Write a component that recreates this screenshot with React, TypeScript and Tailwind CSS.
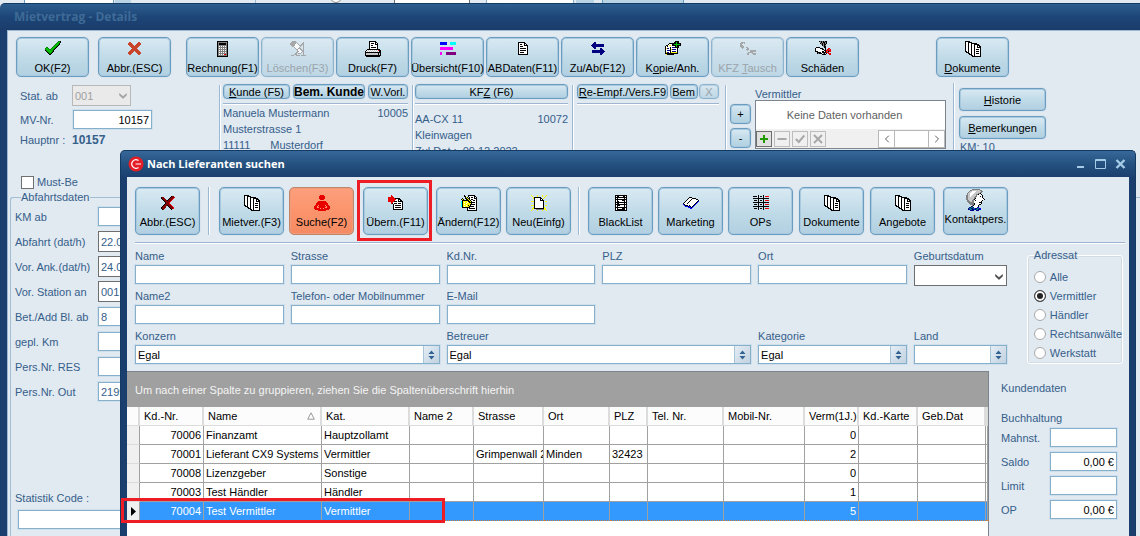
import React, { useState } from 'react';

const PALETTE: Record<string, string> = {
  k: '#000000',
  w: '#ffffff',
  g: '#008000',
  l: '#00c000',
  n: '#000080',
  b: '#0000ff',
  c: '#00ffff',
  m: '#ff00ff',
  p: '#800080',
  r: '#e80000',
  d: '#800000',
  o: '#c8452c',
  y: '#ffff00',
  s: '#808080',
  x: '#8c8c8c',
  t: '#008080',
  v: '#c8c8c8',
};

const ICONS: Record<string, string[]> = {
  check: [
    '.............ggk',
    '............gllk',
    '...........gllk.',
    '..........gllgk.',
    '.........gllgk..',
    '........gllgk...',
    '.gg....gllgk....',
    'gllg..gllgk.....',
    'glllggllgk......',
    'kglllllgk.......',
    '.kgllllgk.......',
    '..kgllgk........',
    '...kggk.........',
    '....kk..........',
  ],
  crossRed: [
    '................',
    '..oo.......oo...',
    '.oooo.....oooo..',
    '.ooooo...ooooo..',
    '..ooooo.ooooo...',
    '...ooooooooo....',
    '....ooooooo.....',
    '.....ooooo......',
    '....ooooooo.....',
    '...ooooooooo....',
    '..ooooo.ooooo...',
    '.ooooo...ooooo..',
    '.oooo.....oooo..',
    '..oo.......oo...',
  ],
  crossDark: [
    '................',
    '...........kdd..',
    '.kdd......kdddr.',
    '.kddd....kdddr..',
    '..kddd..kdddr...',
    '...kdddkdddr....',
    '....kdddddr.....',
    '.....kdddr......',
    '.....kdddr......',
    '....kdddddr.....',
    '...kdddkdddr....',
    '..kddd..kdddr...',
    '.kdddd...kdddr..',
    '.kddd.....kddr..',
    '..kd.......k....',
  ],
  calc: [
    '..kkkkkkkkkkk...',
    '..ksssssssssk...',
    '..kskkkkkkksk...',
    '..kskkkkkkksk...',
    '..ksssssssssk...',
    '..kswswswswsk...',
    '..ksssssssssk...',
    '..kswswswswsk...',
    '..ksssssssssk...',
    '..kswswswswsk...',
    '..ksssssssssk...',
    '..kswswswswsk...',
    '..ksssssssssk...',
    '..kswswswrrsk...',
    '..ksssssssssk...',
    '..kkkkkkkkkkk...',
  ],
  trash: [
    '..xxxx..........',
    '.xxxxxx......x..',
    'xxxxxxwx....xx..',
    'xxxxxwwwx..xxx..',
    '.xxxxwwwwxxx.x..',
    '..xxwwwwwwx..x..',
    '....xwwwwx...x..',
    '.....xwwxxx..x..',
    '......xxwwxx.x..',
    '.......xwwwxxx..',
    '.......xxwwwxx..',
    '......xxwwwx.x..',
    '.....xx.xxx..x..',
    '....xxx......x..',
    '.xxx..xxxx.xxxxx',
  ],
  printer: [
    '....kkkkkkk.....',
    '....kwwwwwkk....',
    '....kwkkkwkwk...',
    '....kwwwwwkkk...',
    '....kwkkwwwwk...',
    '....kwwwwwwwk...',
    '....kwkkkkkwk...',
    '....kwwwwwwwk...',
    '..kkkkkkkkkkkkk.',
    '.kwvwvwvwvwvwrkk',
    'kwvwvwvwvwvwvwkk',
    'kkkkkkkkkkkkkkkk',
    'kvvvvvvvvvvvvkvk',
    'kvvvvvvvvvvvvkvk',
    'kkkkkkkkkkkkkkkk',
    '.kkkkkkkkkkkkkk.',
  ],
  bars: [
    '................',
    'bbbbbbb...cccccc',
    'bbbbbbb...cccccc',
    'bbbbbbb...cccccc',
    '................',
    '................',
    'mmmmmmmmmmmmm...',
    'mmmmmmmmmmmmm...',
    'mmmmmmmmmmmmm...',
    '................',
    '................',
    'mm....pppppppppp',
    'mm....pppppppppp',
    'mm....pppppppppp',
  ],
  page: [
    '................',
    '...kkkkkkk......',
    '...kwwwwwkk.....',
    '...kwkkwwkwk....',
    '...kwwwwwkkkk...',
    '...kwkkkwwwwk...',
    '...kwwwwwwwwk...',
    '...kwkkkkkkwk...',
    '...kwwwwwwwwk...',
    '...kwkkkkkkwk...',
    '...kwwwwwwwwk...',
    '...kwkkkkwwwk...',
    '...kwwwwwwwwk...',
    '...kkkkkkkkkk...',
  ],
  arrows: [
    '................',
    '....nn..........',
    '...nnn..........',
    '..nnnnnnnnnnnn..',
    '.nnnnnnnnnnnnn..',
    '..nnnnnnnnnnnn..',
    '...nnn..........',
    '....nn....nn....',
    '..........nnn...',
    '..nnnnnnnnnnnn..',
    '..nnnnnnnnnnnnn.',
    '..nnnnnnnnnnnn..',
    '..........nnn...',
    '..........nn....',
  ],
  copy: [
    '..........kkkk..',
    '.........kklkk..',
    '....kkkkkkklkkkk',
    '...kwwwkkllllllk',
    '.kkwyywkkkklkkkk',
    'kwkwwwwwwwklkk..',
    'kwwwwkwnnnkkkk..',
    'kynnwkwwwwwwk...',
    'kwwwwkynnnnwk...',
    'kwnnnkwwwwwwk...',
    'kwwwwkwnnnnwk...',
    'kynnwkyyyyyyk...',
    'kkkkkkkkkkkkk...',
    '.ykkkkkkk.......',
  ],
  swap: [
    '................',
    '.xxxx...........',
    'xxx.x...........',
    'xx..............',
    'xxx.............',
    'xxxx............',
    '.xxx..xx........',
    '..x....xx.......',
    '......xxx.......',
    '.......x..xxxxxx',
    '..........xxxxxx',
    '........xxxxx...',
    '.......xx...xxxx',
    '.......xx....xxx',
  ],
  crash: [
    '....kskskskk....',
    '.....skskksk....',
    '.....ksksksk....',
    '......skskk.....',
    '.......ksks.....',
    '........skk.....',
    '.kkkk....kk.....',
    'kwwwwkkk..k..rr.',
    'kwwwwwwkk.k.rrsr',
    'kwwwwwwwwkkrrrrr',
    'kkkwwwwkkwkrskrr',
    '..kkkkwkkkkrrr..',
    '..kskkkwsk.k.rrr',
    '.......kkkk...rr',
  ],
  docs: [
    'kkkkk...........',
    'kwwkkkk.........',
    'kwwkwwkkkkkk....',
    'kwwkwwkwwkkkkk..',
    'kwwkwwkwwkwwkkk.',
    'kwwkwwkwwkwwkwkk',
    'kwwkwwkwwkwwkkkk',
    'kwwkwwkwwkwwwwwk',
    'kwwkwwkwwkwkkkwk',
    'kwwkwwkwwkwwwwwk',
    'kkwkwwkwwkwkkkwk',
    '.kkkwwkwwkwwwwwk',
    '...kkwkwwkwkkkwk',
    '....kkkwwkwwwwwk',
    '......kkwkwwwwwk',
    '.......kkkkkkkkk',
  ],
  person: [
    '......rrrr......',
    '.....rrrrrr.....',
    '.....rrrrrr.....',
    '.....rrrrrr.....',
    '......rrrr......',
    '................',
    '....rrrrrrrr....',
    '...rrrrrrrrrr...',
    '..rrrrrrrrrrrr..',
    '..rrrrrrrrrrrr..',
    '.rrr.rrrrrr.rrr.',
    'rrr.rrrrrrrr.rrr',
    'rrr..rrrrrr..rrr',
    'rrrrrr.rr.rrrrrr',
    '.rrrrrrrrrrrrrr.',
    '....rrrrrrrr....',
  ],
  pageIn: [
    '...r............',
    '...rr...........',
    'rrrrrr..........',
    'rrrrrrrkkkkk....',
    'rrrrrrrrwwkkk...',
    'rrrrrrrwwwkwkk..',
    'rrrrrrkkkwkkkkk.',
    '...rrwwwwwwwwwk.',
    '...rkwkkkwkkkwk.',
    '.....kwwwwwwwwk.',
    '.....kwkkkkkkwk.',
    '.....kwwwwwwwwk.',
    '.....kwkkkkkkwk.',
    '.....kwwwwwwwwk.',
    '.....kkkkkkkkkk.',
  ],
  edit: [
    '...k...kkkkkkk..',
    '...kk..kwwwwwkk.',
    '....kyk.kwkkwkwk',
    '.k..kkykkwwwwkkk',
    'kyk..kkykwkkwwwk',
    '.kkkkkkkykwwkkwk',
    'ckyyyyykkykwwwwk',
    'ckywyywykkkkkkwk',
    'ckyyywyyyykwwwwk',
    'ckywyyyyykkkkkwk',
    'ckyyywykykwwwwwk',
    'ckywyyyykkkkkwwk',
    '.kkkkkkkkwwwwwwk',
    '......kwkkkkkkwk',
    '......kwwwwwwwwk',
    '......kkkkkkkkkk',
  ],
  newPage: [
    'y.....y....y...y',
    '.y....y....y..y.',
    '..ykkkkkkk...y..',
    '..ykwwwwwkk.y...',
    '...kwwwwwkwk....',
    '...kwwwwwkkkk...',
    'yyykwwwwwwwwk.yy',
    '...kwwwwwwwwk...',
    '...kwwwwwwwwk...',
    '...kwwwwwwwwk...',
    'yyykwwwwwwwwk.yy',
    '...kwwwwwwwwk...',
    '..ykwwwwwwwwky..',
    '.yykkkkkkkkkkyy.',
    '.y...ssssssssyy.',
    'y.....y....y...y',
  ],
  list: [
    '..kkkkkkkkkkkk..',
    '..kwkkwwwwkkwk..',
    '..kkkkkkkkkkkk..',
    '..kwkwwwwwwkwk..',
    '..kkkkkkkkkkkk..',
    '..kwkwwwwkkkwk..',
    '..kwkkwwwwwkwk..',
    '..kkkkkkkkkkkk..',
    '..kwkkwwwwwkwk..',
    '..kkkkkkkkkkkk..',
    '..kwkkkwwwwkwk..',
    '..kwkwwwwwwkwk..',
    '..kkkkkkkkkkkk..',
    '..kwkwwwwkkkwk..',
    '..kwkkkkkkkkwk..',
    '..kkkkkkkkkkkk..',
  ],
  book: [
    '................',
    '................',
    '......kkk.......',
    '.....kwwwkkkk...',
    '....kwwwkwwwwkk.',
    '...kwwwkwwwwwwwk',
    '..kwwwkwwwwwwwkb',
    '.kwwwkwwwwwwwkb.',
    'kwwwkwwwwwwwkb..',
    'bkwwwwwwwwwkb...',
    '.bkkkwkwwwkb....',
    '..bbbkbkwkb.....',
    '.....bbbkb......',
    '.......bb.......',
  ],
  ledger: [
    '.....k....k.....',
    'kkkk.k.kk.k.rrrr',
    '.....k....k.....',
    'kkkkkkkkkkkkkkkk',
    '.....k....k.....',
    '.kkk.k.kk.k.rrrr',
    '.....k....k.....',
    'kkkkkkkkkkkkkkkk',
    '.....k....k.....',
    '.kkk.k.kk.k.rrrr',
    '.....k....k.....',
    'kkkkkkkkkkkkkkkk',
    '.....k....k.....',
    '.kkk.k.kk.k.rrrr',
    '.....k....k.....',
  ],
  face: [
    '......ssssssss......',
    '....ssvvvvvvvvss....',
    '...svvwwwwvvvvvss...',
    '..svvwwwwvvvvvss....',
    '.svvwwwwvvvvssk.....',
    '.svvwwwvvvsskwwk....',
    'ssvvwwvvvvswwwwwk...',
    'ssvvwvvvvsswwwkwk...',
    'ssvvvvvvsswwwwwwk...',
    'ssvvvvvvskwwwwwwwk..',
    'ssvvvvvskwwwwwwwwwk.',
    '.ssvvvsswkwwwwwwk...',
    '.sssvvsswwwwwwwk....',
    '..sssssswwwwwkkk....',
    '...ssssskwwwwwwk....',
    '....sssskwwwwkk.....',
    '......skwwwwk.......',
    '.....knwwwwwk.......',
    '...nnttnwwwnb.......',
    '..nttnnttnnttnb.....',
    '..nnttnnbnttnnb.....',
    '....nnnn..nnn.......',
  ],
};

const PixelIcon = ({ name }: { name: string }) => {
  const rows = ICONS[name];
  const size = rows[0].length;
  const height = Math.max(16, rows.length);
  return (
    <svg
      width={size}
      height={height}
      viewBox={`0 0 ${size} ${height}`}
      shapeRendering="crispEdges"
      className="shrink-0"
      aria-hidden="true"
    >
      {rows.map((row, y) =>
        row.split('').map((c, x) =>
          c === '.' ? null : <rect key={`${x}-${y}`} x={x} y={y} width="1" height="1" fill={PALETTE[c]} />
        )
      )}
    </svg>
  );
};

const GLASS =
  'border border-[#6b9dc0] bg-linear-to-b from-[#d9eaf3] via-[#c1dbe8] to-[#b1d0e1] text-black shadow-[inset_0_0_0_1px_#a9cade,0_0_1px_#8fb5cf] whitespace-nowrap shrink-0';

interface ToolProps {
  icon: string;
  label: React.ReactNode;
  disabled?: boolean;
}

const MainTool = ({ icon, label, disabled }: ToolProps) => (
  <button
    type="button"
    disabled={disabled}
    className={`${GLASS} flex h-10 w-[73px] flex-col items-center gap-[3px] rounded-[5px] pt-[3px] leading-4 disabled:text-[#7d868d] disabled:opacity-70`}
  >
    <PixelIcon name={icon} />
    <span>{label}</span>
  </button>
);

const DialogTool = ({ icon, label }: ToolProps) => (
  <button
    type="button"
    className={`${GLASS} flex h-12 w-[65px] flex-col items-center rounded-[5px] leading-4 ${
      icon === 'face' ? 'pt-px' : 'gap-[3px] pt-[7px]'
    } ${
      icon === 'person'
        ? 'border-[#c08468]! from-[#fd9f7c]! via-[#fb946d]! to-[#f58a62]! shadow-[inset_0_0_0_1px_#ee9c7c]!'
        : ''
    }`}
  >
    <PixelIcon name={icon} />
    <span>{label}</span>
  </button>
);

const SmallButton = ({ className, children, disabled }: { className?: string; children: React.ReactNode; disabled?: boolean }) => (
  <button
    type="button"
    disabled={disabled}
    className={`${GLASS} flex items-center justify-center rounded-[4px] leading-3 disabled:text-[#7d868d] disabled:opacity-70 ${className ?? ''}`}
  >
    <span>{children}</span>
  </button>
);

const BOX = 'h-[19px] border border-[#86afcc] bg-white px-0.5 text-black shadow-[0_0_0_1px_#cfe0ec] outline-none rounded-none';

const Chevron = ({ className }: { className?: string }) => (
  <svg width="8" height="6" viewBox="0 0 8 6" className={`pointer-events-none absolute ${className ?? ''}`} aria-hidden="true">
    <path d="M0.5 0.5v1.8L4 5.6l3.5-3.3V0.5L4 3.6z" fill="currentColor" stroke="currentColor" strokeWidth="0.5" />
  </svg>
);

const Field = ({ id, label }: { id: string; label: string }) => (
  <div className="min-w-0">
    <label htmlFor={id} className="block h-[15px] truncate leading-3">{label}</label>
    <input id={id} type="text" className={`${BOX} block w-full`} />
  </div>
);

const Combo = ({ id, label, value, span }: { id: string; label: string; value: string; span?: boolean }) => (
  <div className={`min-w-0 ${span ? 'col-span-2' : ''}`}>
    <label htmlFor={id} className="block h-[15px] leading-3">{label}</label>
    <div className="relative">
      <select id={id} className={`${BOX} block w-full appearance-none`}>
        <option>{value}</option>
      </select>
      <span className="pointer-events-none absolute inset-y-px right-px flex w-4 items-center justify-center border-l border-[#a9c5d9] bg-linear-to-br from-[#e3edf5] to-[#c2d2e0]">
        <svg width="7" height="10" viewBox="0 0 7 10" aria-hidden="true">
          <path d="M0.5 4L3.5 0.5L6.5 4zM0.5 6L3.5 9.5L6.5 6z" fill="#2f6291" />
        </svg>
      </span>
    </div>
  </div>
);

const COLUMNS = [
  { title: '', width: 'w-[13px]' },
  { title: 'Kd.-Nr.', width: 'w-16' },
  { title: 'Name', width: 'w-[118px]' },
  { title: 'Kat.', width: 'w-[88px]' },
  { title: 'Name 2', width: 'w-16' },
  { title: 'Strasse', width: 'w-[70px]' },
  { title: 'Ort', width: 'w-[66px]' },
  { title: 'PLZ', width: 'w-[38px]' },
  { title: 'Tel. Nr.', width: 'w-[76px]' },
  { title: 'Mobil-Nr.', width: 'w-[81px]' },
  { title: 'Verm(1J.)', width: 'w-[54px]' },
  { title: 'Kd.-Karte', width: 'w-[59px]' },
  { title: 'Geb.Dat', width: 'w-[68px]' },
  { title: '', width: '' },
];

const SUPPLIERS = [
  ['70006', 'Finanzamt', 'Hauptzollamt', '', '', '', '', '', '', '0', '', '', ''],
  ['70001', 'Lieferant CX9 Systems G', 'Vermittler', '', 'Grimpenwall 2', 'Minden', '32423', '', '', '2', '', '', ''],
  ['70008', 'Lizenzgeber', 'Sonstige', '', '', '', '', '', '', '0', '', '', ''],
  ['70003', 'Test Händler', 'Händler', '', '', '', '', '', '', '1', '', '', ''],
  ['70004', 'Test Vermittler', 'Vermittler', '', '', '', '', '', '', '5', '', '', ''],
];

const DEPARTURE = [
  { id: 'km-ab', label: 'KM ab', value: '' },
  { id: 'abfahrt', label: 'Abfahrt (dat/h)', value: '22.0', dark: true },
  { id: 'ankunft', label: 'Vor. Ank.(dat/h)', value: '24.0', dark: true },
  { id: 'station', label: 'Vor. Station an', value: '001', dark: true },
  { id: 'bet', label: 'Bet./Add Bl. ab', value: '8' },
  { id: 'gepl-km', label: 'gepl. Km', value: '' },
  { id: 'pers-res', label: 'Pers.Nr. RES', value: '' },
  { id: 'pers-out', label: 'Pers.Nr. Out', value: '2199' },
];

const ACCOUNTING = [
  { id: 'mahnst', label: 'Mahnst.', value: '' },
  { id: 'saldo', label: 'Saldo', value: '0,00 €' },
  { id: 'limit', label: 'Limit', value: '' },
  { id: 'op', label: 'OP', value: '0,00 €' },
];

const Divider = ({ className }: { className?: string }) => (
  <div className={`w-0.5 shrink-0 border-l border-r border-l-[#9db8d2] border-r-white ${className ?? ''}`} />
);

const Rule = () => <div className="h-0.5 border-t border-b border-t-[#9fb4d0] border-b-white" />;

const SupplierTable = () => {
  const [selected, setSelected] = useState(4);
  return (
    <table className="w-full table-fixed border-separate border-spacing-0 text-black">
      <thead>
        <tr>
          {COLUMNS.map((col, i) => (
            <th
              key={i}
              className={`${col.width} h-[19px] overflow-hidden border-r-2 border-b border-[#dcdcdc] bg-[#fcfcfc] p-0 pl-1 text-left leading-4 font-normal whitespace-nowrap`}
            >
              {i === 2 ? (
                <span className="flex items-center justify-between pr-[5px]">
                  {col.title}
                  <svg width="8" height="8" viewBox="0 0 8 8" aria-hidden="true">
                    <path d="M4 0.8L7.3 7.2H0.7z" fill="none" stroke="#9a9a9a" />
                  </svg>
                </span>
              ) : (
                col.title
              )}
            </th>
          ))}
        </tr>
      </thead>
      <tbody>
        {SUPPLIERS.map((row, r) => {
          const active = r === selected;
          return (
            <tr key={row[0]} onClick={() => setSelected(r)} className={active ? 'bg-[#3399ff] text-white' : 'bg-white'}>
              <td className="relative h-[19px] border-r border-b border-r-[#a0a0a0] border-b-[#dcdcdc] bg-[#f0f0f0] p-0">
                {active && (
                  <>
                    <svg width="5" height="9" viewBox="0 0 5 9" className="ml-1" aria-hidden="true">
                      <path d="M0 0L5 4.5L0 9z" fill="#000" />
                    </svg>
                    <span className="pointer-events-none absolute -top-1 -left-1.5 z-10 h-[25px] w-[324px] border-[3px] border-[#ee1c24]" />
                  </>
                )}
              </td>
              {row.map((cell, c) => (
                <td
                  key={c}
                  className={`h-[19px] overflow-hidden border-r border-b border-r-[#a0a0a0] p-0 leading-4 whitespace-nowrap ${
                    active ? 'border-b-[#c87838] [border-bottom-style:dotted]' : 'border-b-[#a0a0a0]'
                  } ${c === 0 || c === 9 ? 'pr-0.5 text-right' : 'pl-0.5'}`}
                >
                  {cell}
                </td>
              ))}
            </tr>
          );
        })}
      </tbody>
    </table>
  );
};

const SearchDialog = () => {
  const [addressee, setAddressee] = useState('Vermittler');
  return (
    <section className="absolute top-[150px] right-1 bottom-0 left-[120px] flex flex-col rounded-t-[5px] border-t border-r border-l border-[#123a63] bg-[#1a3f6f]">
      <header className="flex h-[26px] shrink-0 items-center gap-[3px] rounded-t-[4px] bg-linear-to-b from-[#37689a] via-[#24517f] to-[#1b4070] pr-2 pl-[7px]">
        <svg width="16" height="16" viewBox="0 0 16 16" aria-hidden="true">
          <circle cx="8" cy="8" r="7.5" fill="#e41e26" />
          <path d="M10.5 4.6A4.2 4.2 0 1 0 10.5 11.4M7.5 8h5.5" fill="none" stroke="#fff" strokeWidth="1.2" />
        </svg>
        <h2 className="flex-1 font-['Open_Sans','Noto_Sans',sans-serif] text-[11px] leading-4 font-bold text-white">Nach Lieferanten suchen</h2>
        <div className="flex items-center gap-2 text-[#a5cbe6]">
          <button type="button" aria-label="Minimieren">
            <svg width="12" height="12" viewBox="0 0 12 12"><path d="M2 9h7" stroke="currentColor" strokeWidth="2" /></svg>
          </button>
          <button type="button" aria-label="Maximieren">
            <svg width="12" height="12" viewBox="0 0 12 12" fill="none" stroke="currentColor"><path d="M0.5 1.5h10v9h-10zM0.5 2.5h10" /></svg>
          </button>
          <button type="button" aria-label="Schließen">
            <svg width="12" height="12" viewBox="0 0 12 12"><path d="M1.5 2l8 8M9.5 2l-8 8" stroke="currentColor" strokeWidth="2.4" /></svg>
          </button>
        </div>
      </header>

      <div className="mx-1.5 flex min-h-0 flex-1 flex-col bg-[#e1e9f1]">
        <div className="flex pt-2.5 pl-2">
          <DialogTool icon="crossDark" label="Abbr.(ESC)" />
          <Divider className="mr-[9px] ml-2" />
          <div className="flex gap-[5px]">
            <DialogTool icon="docs" label="Mietver.(F3)" />
            <DialogTool icon="person" label="Suche(F2)" />
          </div>
          <div className="relative mr-2 ml-[9px] flex">
            <DialogTool icon="pageIn" label="Übern.(F11)" />
            <span className="pointer-events-none absolute -top-[7px] -right-1 -bottom-1.5 -left-1.5 border-[3px] border-[#ee1c24]" />
          </div>
          <div className="flex gap-[5px]">
            <DialogTool icon="edit" label="Ändern(F12)" />
            <DialogTool icon="newPage" label="Neu(Einfg)" />
          </div>
          <Divider className="mr-2 ml-[7px]" />
          <div className="flex gap-[5px]">
            <DialogTool icon="list" label="BlackList" />
            <DialogTool icon="book" label="Marketing" />
            <DialogTool icon="ledger" label="OPs" />
          </div>
          <div className="flex gap-1.5 pl-1.5">
            <DialogTool icon="docs" label="Dokumente" />
            <DialogTool icon="docs" label="Angebote" />
          </div>
          <div className="pl-2">
            <DialogTool icon="face" label="Kontaktpers." />
          </div>
        </div>
        <div className="px-2 pt-[7px] pr-1">
          <Rule />
        </div>

        <div className="flex items-start gap-5 pr-1.5 pl-2">
          <div className="grid flex-1 grid-cols-[repeat(5,minmax(0,8fr))_minmax(0,5fr)] gap-x-[7px] gap-y-1.5 pt-1.5">
            <Field id="name" label="Name" />
            <Field id="strasse" label="Strasse" />
            <Field id="kdnr" label="Kd.Nr." />
            <Field id="plz" label="PLZ" />
            <Field id="ort" label="Ort" />
            <div className="relative">
              <label htmlFor="geburt" className="block h-[15px] leading-3">Geburtsdatum</label>
              <select id="geburt" className="-mb-0.5 block h-[21px] w-full appearance-none border border-[#6e6e6e] bg-white" />
              <Chevron className="right-1 bottom-1 text-[#444]" />
            </div>
            <Field id="name2" label="Name2" />
            <Field id="telefon" label="Telefon- oder Mobilnummer" />
            <Field id="email" label="E-Mail" />
            <div className="col-span-3" />
            <Combo id="konzern" label="Konzern" value="Egal" span />
            <Combo id="betreuer" label="Betreuer" value="Egal" span />
            <Combo id="kategorie" label="Kategorie" value="Egal" />
            <Combo id="land" label="Land" value="" />
          </div>
          <fieldset className="mt-[3px] w-[94px] shrink-0 rounded-[3px] border border-white pb-px pl-1.5 shadow-[inset_0_0_0_1px_#d3dce4]">
            <legend className="h-4 leading-4">Adressat</legend>
            <div className="pt-1">
              {['Alle', 'Vermittler', 'Händler', 'Rechtsanwälte', 'Werkstatt'].map(name => (
                <label key={name} className="flex h-[19px] items-center gap-1 whitespace-nowrap">
                  <input
                    type="radio"
                    name="adressat"
                    checked={addressee === name}
                    onChange={() => setAddressee(name)}
                    className="size-3 shrink-0 appearance-none rounded-full border border-[#a8a8a8] bg-white checked:border-[#444] checked:bg-[#222] checked:shadow-[inset_0_0_0_2px_#fff]"
                  />
                  {name}
                </label>
              ))}
            </div>
          </fieldset>
        </div>

        <div className="mt-[7px] flex min-h-0 flex-1">
          <div className="min-w-0 flex-1 border-t border-r border-[#7c858f] bg-white">
            <p className="flex h-[35px] items-center bg-[#a0a0a0] pl-2 text-[#f4f4f4]">
              Um nach einer Spalte zu gruppieren, ziehen Sie die Spaltenüberschrift hierhin
            </p>
            <SupplierTable />
          </div>
          <aside className="w-[140px] shrink-0 pr-3 pl-3">
            <h3 className="pt-[9px] leading-4">Kundendaten</h3>
            <h3 className="pt-3.5 leading-4">Buchhaltung</h3>
            <div className="flex flex-col gap-[5px] pt-0.5">
              {ACCOUNTING.map(row => (
                <div key={row.id} className="flex items-center justify-between">
                  <label htmlFor={row.id}>{row.label}</label>
                  <input id={row.id} type="text" defaultValue={row.value} className={`${BOX} w-[67px] text-right`} />
                </div>
              ))}
            </div>
          </aside>
        </div>
      </div>
    </section>
  );
};

// sliver of the window lying behind
const BackWindow = () => (
  <div className="flex h-[3px] shrink-0 items-end overflow-hidden bg-[#e1e9f1] pl-6 text-[#35608a]">
    <div className="h-full w-[90px] border-x border-[#6b9dc0] bg-white" />
    <div className="ml-px h-full w-4 bg-[#b9d4e4]" />
    <div className="ml-[124px] h-full w-px bg-[#9db8d2]" />
    <div className="ml-[74px] size-3 rounded-full border border-[#888] bg-white" />
    <div className="ml-[52px] h-full w-[76px] border-x border-[#6e6e6e] bg-white" />
    <div className="ml-4 h-full w-[88px] border-x border-[#86afcc] bg-white" />
    <div className="ml-0.5 h-full w-[18px] bg-[#b9d4e4]" />
    <div className="ml-2 h-full w-[82px] border-x border-[#6b9dc0] bg-[#b9d4e4]" />
  </div>
);

const NAV = [
  { name: 'Hinzufügen', d: 'M5 1v8M1 5h8', tone: 'text-[#1f9a00] border-[#6e6e6e] bg-[#e0e0e0]' },
  { name: 'Entfernen', d: 'M0.5 5h9', tone: 'text-[#a8a8a8] border-[#bdbdbd]' },
  { name: 'Übernehmen', d: 'M0.8 5l3 3l5.5-6.5', tone: 'text-[#a8a8a8] border-[#bdbdbd]' },
  { name: 'Abbrechen', d: 'M1 1l8 8M9 1l-8 8', tone: 'text-[#a8a8a8] border-[#bdbdbd]' },
];

const App: React.FC = () => {
  const [mustBe, setMustBe] = useState(false);

  return (
    <div className="relative flex h-screen flex-col overflow-hidden bg-[#e1e9f1] font-['Liberation_Sans',Arial,sans-serif] text-[11px] leading-4 text-[#35608a]">
      <BackWindow />
      <header className="flex h-[27px] shrink-0 items-center rounded-tl-[5px] border-t border-[#123a63] bg-linear-to-b from-[#2c5e8f] via-[#1d4577] to-[#1a3c6b] pl-3.5">
        <h1 className="font-['Open_Sans','Noto_Sans',sans-serif] text-[12px] font-bold text-[#3d6b96]">Mietvertrag - Details</h1>
      </header>

      <main className="flex min-h-0 flex-1 flex-col border-l-[7px] border-[#1a3f6f]">
        <div className="flex min-h-0 flex-1 flex-col border-t border-l border-[#9db8d2]">
          <div className="flex gap-[15px] pt-1.5 pl-2">
            <div className="flex gap-[9px]">
              <MainTool icon="check" label="OK(F2)" />
              <MainTool icon="crossRed" label="Abbr.(ESC)" />
            </div>
            <div className="flex gap-0.5">
              <MainTool icon="calc" label="Rechnung(F1)" />
              <MainTool icon="trash" label="Löschen(F3)" disabled />
              <MainTool icon="printer" label="Druck(F7)" />
              <MainTool icon="bars" label="Übersicht(F10)" />
              <MainTool icon="page" label="ABDaten(F11)" />
              <MainTool icon="arrows" label="Zu/Ab(F12)" />
              <MainTool icon="copy" label={<>K<u>o</u>pie/Anh.</>} />
              <MainTool icon="swap" label={<>KFZ <u>T</u>ausch</>} disabled />
              <MainTool icon="crash" label="Schäden" />
            </div>
            <div className="pl-[62px]">
              <MainTool icon="docs" label={<><u>D</u>okumente</>} />
            </div>
          </div>

          <div className="flex pl-3">
            <div className="w-[199px] shrink-0 pt-2">
              <div className="flex h-[21px] items-center">
                <label htmlFor="stat-ab" className="w-[52px]">Stat. ab</label>
                <div className="relative text-[#a0a0a0]">
                  <select id="stat-ab" disabled className="block h-[21px] w-[59px] appearance-none border border-[#b8b8b8] bg-[#eaeaea] pl-0.5 opacity-100">
                    <option>001</option>
                  </select>
                  <Chevron className="top-2 right-1" />
                </div>
              </div>
              <div className="mt-1 flex h-[19px] items-center">
                <label htmlFor="mv-nr" className="w-[53px]">MV-Nr.</label>
                <input id="mv-nr" type="text" defaultValue="10157" className={`${BOX} w-[79px] text-right`} />
              </div>
              <div className="flex h-[21px] items-center">
                <span className="w-[52px]">Hauptnr :</span>
                <b className="text-[12px]">10157</b>
              </div>
            </div>

            <Divider className="mt-2" />
            <div className="w-[191px] shrink-0 pt-[7px] pr-1 pl-0.5">
              <div className="flex justify-between pb-1">
                <SmallButton className="h-[15px] w-[67px]"><u>K</u>unde (F5)</SmallButton>
                <SmallButton className="h-[15px] w-[72px] text-[12px] font-bold">Bem. Kunde</SmallButton>
                <SmallButton className="h-[15px] w-10">W.Vorl.</SmallButton>
              </div>
              <Rule />
              <div className="flex justify-between"><span>Manuela Mustermann</span><span>10005</span></div>
              <p>Musterstrasse 1</p>
              <p className="flex gap-5"><span>11111</span><span>Musterdorf</span></p>
            </div>

            <Divider className="mt-2" />
            <div className="w-[158px] shrink-0 pt-[7px] pr-1 pl-px">
              <SmallButton className="mb-1 h-[15px] w-full">KF<u>Z</u> (F6)</SmallButton>
              <Rule />
              <div className="flex justify-between pt-1.5"><span>AA-CX 11</span><span>10072</span></div>
              <p>Kleinwagen</p>
              <p>Zul.Dat.: &nbsp;09.12.2022</p>
            </div>

            <Divider className="mt-2" />
            <div className="w-[151px] shrink-0 pt-[7px] pr-1.5 pl-[3px]">
              <div className="flex justify-between pb-1">
                <SmallButton className="h-[15px] w-[91px]"><u>R</u>e-Empf./Vers.F9</SmallButton>
                <SmallButton className="h-[15px] w-7">Bem</SmallButton>
                <SmallButton className="h-[15px] w-5" disabled>X</SmallButton>
              </div>
              <Rule />
            </div>

            <Divider className="mt-2" />
            <div className="flex w-[226px] shrink-0 gap-1 pl-[3px]">
              <div className="flex flex-col gap-1 pt-[27px]">
                <SmallButton className="h-5 w-[21px]">+</SmallButton>
                <SmallButton className="h-5 w-[21px]">-</SmallButton>
              </div>
              <div className="w-[191px] pt-[9px]">
                <h3 className="h-3.5">Vermittler</h3>
                <div className="border border-[#7c858f] bg-white">
                  <p className="flex h-7 items-center justify-center pr-3 text-[#5f5f5f]">Keine Daten vorhanden</p>
                  <div className="flex h-[19px] items-center bg-[#f0f0f0]">
                    <div className="flex flex-1 gap-0.5">
                      {NAV.map(item => (
                        <button
                          key={item.name}
                          type="button"
                          aria-label={item.name}
                          className={`${item.tone} flex size-4 items-center justify-center border`}
                        >
                          <svg width="10" height="10" viewBox="0 0 10 10"><path d={item.d} fill="none" stroke="currentColor" strokeWidth="2" /></svg>
                        </button>
                      ))}
                    </div>
                    <button type="button" aria-label="Zurück" className="flex h-[18px] w-[17px] items-center justify-center border border-[#b8b8b8] bg-white">
                      <svg width="6" height="8" viewBox="0 0 6 8"><path d="M4.8 0.7L1.5 4l3.3 3.3" fill="none" stroke="#606060" /></svg>
                    </button>
                    <div className="h-[18px] w-[33px] border-y border-[#b8b8b8] bg-white" />
                    <button type="button" aria-label="Weiter" className="flex h-[18px] w-[17px] items-center justify-center border border-[#b8b8b8] bg-white">
                      <svg width="6" height="8" viewBox="0 0 6 8"><path d="M1.2 0.7L4.5 4L1.2 7.3" fill="none" stroke="#606060" /></svg>
                    </button>
                  </div>
                </div>
              </div>
            </div>

            <Divider className="mt-1.5" />
            <div className="shrink-0 pt-[11px] pl-1">
              <SmallButton className="h-[23px] w-[87px]"><u>H</u>istorie</SmallButton>
              <SmallButton className="mt-[5px] h-[23px] w-[87px]"><u>B</u>emerkungen</SmallButton>
              <p className="pl-px">KM: 10</p>
            </div>
          </div>

          <label className="mt-4 flex h-3.5 items-center gap-[3px] pl-[13px]">
            <input
              type="checkbox"
              checked={mustBe}
              onChange={() => setMustBe(!mustBe)}
              className="size-[13px] appearance-none border border-[#707070] bg-white checked:bg-[#35608a]"
            />
            Must-Be
          </label>

          <fieldset className="ml-0.5 min-h-0 flex-1 rounded-tl-[3px] border-t border-l border-[#a3bdd3] pl-1">
            <legend className="ml-1.5 h-4 leading-4">Abfahrtsdaten</legend>
            <div className="flex flex-col gap-1.5 pt-0.5">
              {DEPARTURE.map(row => (
                <div key={row.id} className="flex h-[19px] items-center">
                  <label htmlFor={row.id} className="w-[83px] shrink-0 whitespace-nowrap">{row.label}</label>
                  <input
                    id={row.id}
                    type="text"
                    defaultValue={row.value}
                    className={`${BOX} w-40 text-[#35608a]! ${row.dark ? 'h-[21px]! border-[#6e6e6e]! shadow-none!' : ''}`}
                  />
                </div>
              ))}
            </div>
            <label htmlFor="statistik" className="mt-[89px] block leading-4">Statistik Code :</label>
            <input id="statistik" type="text" className={`${BOX} mt-1 ml-[3px] block w-60`} />
          </fieldset>
        </div>
      </main>

      <SearchDialog />
    </div>
  );
};

export default App;
